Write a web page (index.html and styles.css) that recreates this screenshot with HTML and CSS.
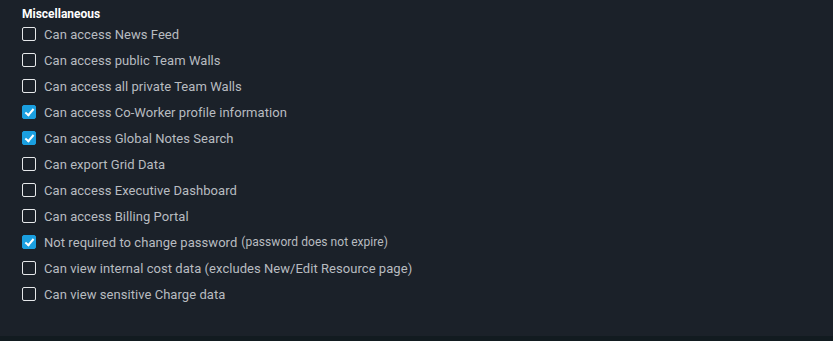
FILE: index.html
```html
<!DOCTYPE html>
<html lang="en">
<head>
    <meta charset="UTF-8">
    <meta name="viewport" content="width=device-width, initial-scale=1.0">
    <title>Permissions</title>
    <link rel="stylesheet" href="styles.css">
</head>
<body>
    <div class="panel">
        <h4 class="section-title">Miscellaneous</h4>
        <ul class="perm-list">
            <li><label><span class="box"></span>Can access News Feed</label></li>
            <li><label><span class="box"></span>Can access public Team Walls</label></li>
            <li><label><span class="box"></span>Can access all private Team Walls</label></li>
            <li><label><span class="box checked"></span>Can access Co-Worker profile information</label></li>
            <li><label><span class="box checked"></span>Can access Global Notes Search</label></li>
            <li><label><span class="box"></span>Can export Grid Data</label></li>
            <li><label><span class="box"></span>Can access Executive Dashboard</label></li>
            <li><label><span class="box"></span>Can access Billing Portal</label></li>
            <li><label><span class="box checked"></span>Not required to change password <small>(password does not expire)</small></label></li>
            <li><label><span class="box"></span>Can view internal cost data (excludes New/Edit Resource page)</label></li>
            <li><label><span class="box"></span>Can view sensitive Charge data</label></li>
        </ul>
    </div>
    <div class="footer-strip"></div>
</body>
</html>
```

FILE: styles.css
```css
body {
    margin: 0;
    background-color: #1b2129;
    font-family: Roboto, "Liberation Sans", sans-serif;
    color: #b8bcc0;
}

.panel {
    height: 336px;
    padding: 7px 22px 0 22px;
    box-sizing: border-box;
}

.section-title {
    margin: 0;
    font-size: 12px;
    font-weight: bold;
    color: #ffffff;
    line-height: 14px;
}

.perm-list {
    list-style: none;
    margin: 0;
    padding: 0;
}

.perm-list li {
    height: 26px;
    display: flex;
    align-items: center;
}

.perm-list label {
    display: flex;
    align-items: center;
    font-size: 13px;
    letter-spacing: 0.05px;
}

.perm-list small {
    font-size: 12px;
    margin-left: 4px;
}

.box {
    width: 14px;
    height: 14px;
    box-sizing: border-box;
    border: 1px solid #e6e8ea;
    border-radius: 2px;
    margin-right: 8px;
    flex-shrink: 0;
    position: relative;
}

.box.checked {
    background-color: #1a9fe0;
    border-color: #1a9fe0;
}

.box.checked::after {
    content: "";
    position: absolute;
    left: 4px;
    top: 1px;
    width: 3px;
    height: 7px;
    border: solid #ffffff;
    border-width: 0 2px 2px 0;
    transform: rotate(40deg);
}

.footer-strip {
    height: 5px;
    background-color: #121b20;
}
```
